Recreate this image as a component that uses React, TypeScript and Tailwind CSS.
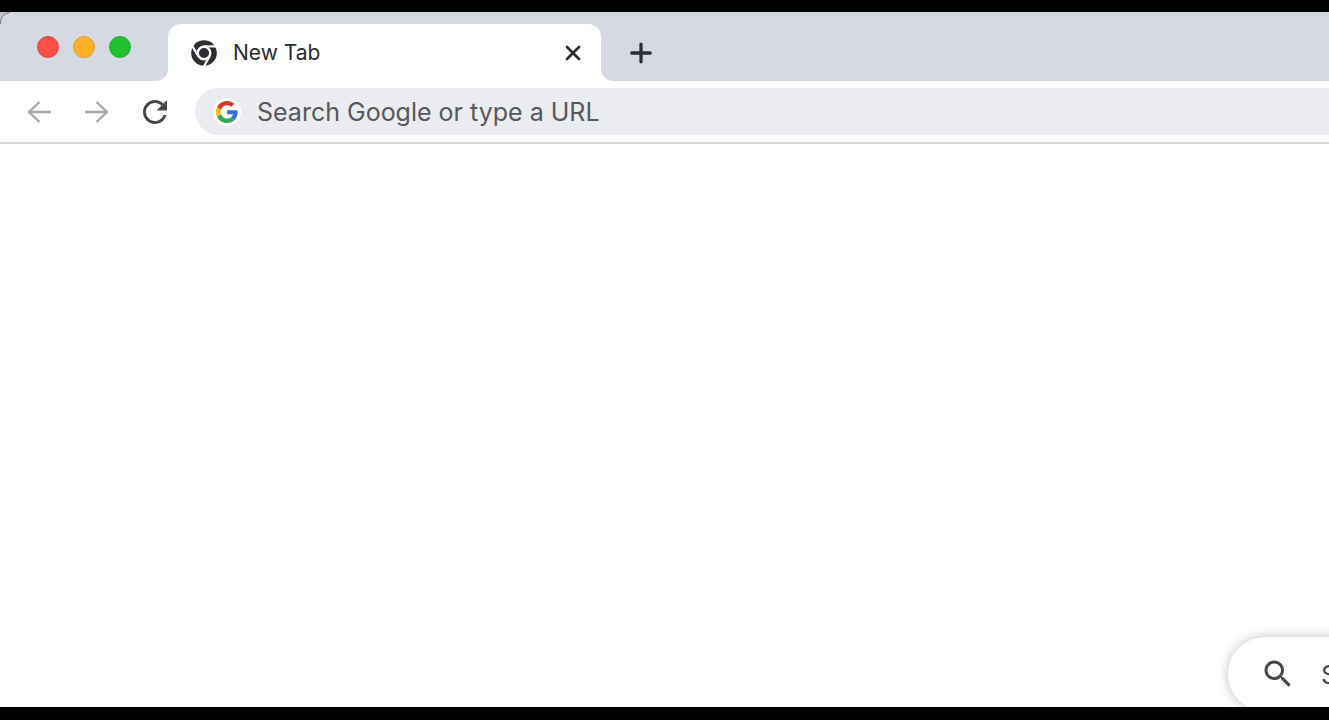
import type { ReactNode } from 'react';

const UI_FONT = "font-['Inter','Liberation_Sans',sans-serif]";

function ChromeLogo() {
  return (
    <svg viewBox="0 0 26 26" className="h-[26px] w-[26px] shrink-0" aria-hidden="true">
      <circle cx="13" cy="13" r="12.8" fill="#2c2e32" />
      <g stroke="#fff" strokeWidth="2.2">
        <path d="M13 6.4H26" />
        <path d="M13 6.4H26" transform="rotate(120 13 13)" />
        <path d="M13 6.4H26" transform="rotate(240 13 13)" />
      </g>
      <circle cx="13" cy="13" r="6.3" fill="#2c2e32" stroke="#fff" strokeWidth="2.4" />
    </svg>
  );
}

function GoogleLogo() {
  return (
    <span className="flex h-7 w-7 shrink-0 items-center justify-center rounded-full bg-white">
      <svg viewBox="0 0 48 48" className="h-[22px] w-[22px]" aria-hidden="true">
        <path fill="#E0352B" d="M24 9.5c3.54 0 6.71 1.22 9.21 3.6l6.85-6.85C35.9 2.38 30.47 0 24 0 14.62 0 6.51 5.38 2.56 13.22l7.98 6.19C12.43 13.72 17.74 9.5 24 9.5z" />
        <path fill="#3272E0" d="M46.98 24.55c0-1.57-.15-3.09-.38-4.55H24v9.02h12.94c-.58 2.96-2.26 5.48-4.78 7.18l7.73 6c4.51-4.18 7.09-10.36 7.09-17.65z" />
        <path fill="#FBBC05" d="M10.53 28.59c-.48-1.45-.76-2.99-.76-4.59s.27-3.14.76-4.59l-7.98-6.19C.92 16.46 0 20.12 0 24c0 3.88.92 7.54 2.56 10.78l7.97-6.19z" />
        <path fill="#34A853" d="M24 48c6.48 0 11.93-2.13 15.89-5.81l-7.73-6c-2.15 1.45-4.92 2.3-8.16 2.3-6.26 0-11.57-4.22-13.47-9.91l-7.98 6.19C6.51 42.62 14.62 48 24 48z" />
      </svg>
    </span>
  );
}

function ArrowIcon({ className = '' }: { className?: string }) {
  return (
    <svg viewBox="0 0 24 22" className={`h-[22px] w-6 ${className}`} fill="none" stroke="#a9a9ab" strokeWidth="2.4" aria-hidden="true">
      <path d="M24 11H2M12.5 1L2 11l10.5 10" />
    </svg>
  );
}

function ToolButton({ label, children }: { label: string; children: ReactNode }) {
  return (
    <button type="button" aria-label={label} className="flex h-9 w-9 shrink-0 items-center justify-center">
      {children}
    </button>
  );
}

function TabStrip() {
  return (
    <div className="flex h-[69px] shrink-0 items-end bg-[#d5d9e2]">
      {/* Window controls */}
      <div className="flex w-[168px] shrink-0 gap-3.5 self-center pl-[37px]">
        <button type="button" aria-label="Close window" className="h-[22px] w-[22px] rounded-full border border-[#e0443f] bg-[#fe4f49]" />
        <button type="button" aria-label="Minimize window" className="h-[22px] w-[22px] rounded-full border border-[#dd9c2e] bg-[#fdb127]" />
        <button type="button" aria-label="Zoom window" className="h-[22px] w-[22px] rounded-full border border-[#22ac33] bg-[#20c030]" />
      </div>

      {/* Active tab */}
      <div className="relative flex h-[57px] w-[433px] items-center rounded-t-[13px] bg-white pr-4 pl-[23px]">
        <svg viewBox="0 0 12 12" className="absolute bottom-0 -left-3 h-3 w-3" aria-hidden="true">
          <path d="M12 0v12H0A12 12 0 0 0 12 0z" fill="#fff" />
        </svg>
        <svg viewBox="0 0 12 12" className="absolute -right-3 bottom-0 h-3 w-3" aria-hidden="true">
          <path d="M0 0v12h12A12 12 0 0 1 0 0z" fill="#fff" />
        </svg>
        <ChromeLogo />
        <span className="ml-4 flex-1 text-[21px] leading-7 text-[#2b2c30]">New Tab</span>
        <button type="button" aria-label="Close tab" className="flex h-6 w-6 items-center justify-center">
          <svg viewBox="0 0 16 16" className="h-4 w-4" stroke="#2b2e33" strokeWidth="2.7" strokeLinecap="round" aria-hidden="true">
            <path d="M2 2l12 12M14 2L2 14" />
          </svg>
        </button>
      </div>

      <button type="button" aria-label="New tab" className="ml-6 flex h-[57px] w-8 items-center justify-center">
        <svg viewBox="0 0 22 22" className="h-[22px] w-[22px]" stroke="#2b2e36" strokeWidth="3.3" strokeLinecap="round" aria-hidden="true">
          <path d="M11 2.2v17.6M1.8 11h18.4" />
        </svg>
      </button>
    </div>
  );
}

function Toolbar() {
  return (
    <div className="flex h-[63px] shrink-0 items-center gap-[22px] border-b-2 border-[#dad9e0] bg-white pl-[21px]">
      <ToolButton label="Back">
        <ArrowIcon />
      </ToolButton>
      <ToolButton label="Forward">
        <ArrowIcon className="rotate-180" />
      </ToolButton>
      <ToolButton label="Reload">
        <svg viewBox="0 0 24 24" className="h-9 w-9" fill="#46484c" aria-hidden="true">
          <path d="M17.65 6.35C16.2 4.9 14.21 4 12 4c-4.42 0-7.99 3.58-7.99 8s3.57 8 7.99 8c3.73 0 6.84-2.55 7.73-6h-2.08c-.82 2.33-3.04 4-5.65 4-3.31 0-6-2.69-6-6s2.69-6 6-6c1.66 0 3.14.69 4.22 1.78L13 11h7V4l-2.35 2.35z" />
        </svg>
      </ToolButton>

      {/* Address bar */}
      <label className="flex h-[47px] flex-1 items-center gap-4 rounded-l-full bg-[#ebecf0] pl-[18px]">
        <GoogleLogo />
        <input
          type="text"
          aria-label="Address and search bar"
          placeholder="Search Google or type a URL"
          className="h-10 min-w-0 flex-1 bg-transparent text-[25px] text-[#56575b] placeholder:text-[#56575b] focus:outline-none"
        />
      </label>
    </div>
  );
}

export default function App() {
  return (
    <div className={`flex h-screen flex-col overflow-hidden border-t-[12px] border-b-[13px] border-black bg-white ${UI_FONT}`}>
      <header className="relative">
        <TabStrip />
        <Toolbar />
        {/* Rounded corner of the window */}
        <svg viewBox="0 0 12 12" className="absolute top-0 left-0 h-3 w-3" aria-hidden="true">
          <path d="M0 0h10A10 10 0 0 0 0 12z" fill="#c3c4c7" />
          <path d="M10 .5A10 10 0 0 0 .5 12" fill="none" stroke="#77787b" />
        </svg>
      </header>

      <main className="flex flex-1 items-end justify-end overflow-hidden">
        <div className="h-[70px] w-[101px]">
          <label className="flex h-[74px] w-[640px] items-center gap-[25px] rounded-full bg-white pl-8 shadow-[0_0_12px_rgba(0,0,0,0.26)]">
            <svg viewBox="0 0 24 24" className="h-9 w-9 shrink-0" fill="#46484c" aria-hidden="true">
              <path d="M15.5 14h-.79l-.28-.27C15.41 12.59 16 11.11 16 9.5 16 5.91 13.09 3 9.5 3S3 5.91 3 9.5 5.91 16 9.5 16c1.61 0 3.09-.59 4.23-1.57l.27.28v.79l5 4.99L20.49 19l-4.99-5zm-6 0C7.01 14 5 11.99 5 9.5S7.01 5 9.5 5 14 7.01 14 9.5 11.99 14 9.5 14z" />
            </svg>
            <input
              type="text"
              aria-label="Search"
              placeholder="Search Google or type a URL"
              className="h-10 min-w-0 flex-1 bg-transparent text-[26px] text-[#46484c] placeholder:text-[#46484c] focus:outline-none"
            />
          </label>
        </div>
      </main>
    </div>
  );
}
